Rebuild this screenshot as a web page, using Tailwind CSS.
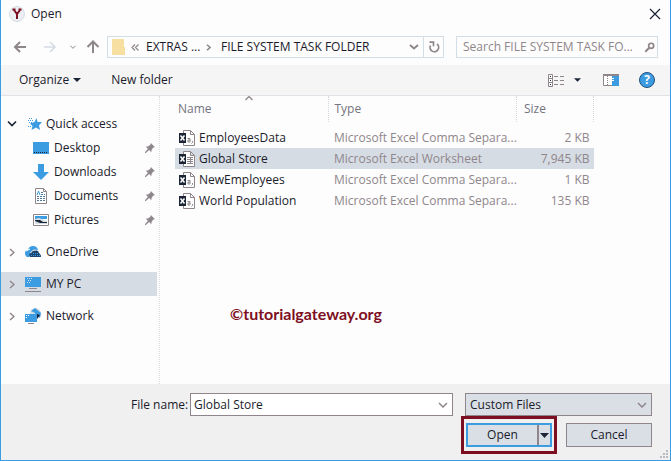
<!DOCTYPE html>
<html lang="en">
<head>
<meta charset="utf-8">
<title>Open</title>
<script src="https://cdn.jsdelivr.net/npm/@tailwindcss/browser@4"></script>
</head>
<body class="font-['Open_Sans','Noto_Sans',sans-serif] text-xs text-[#1b1b2b]">
<svg class="hidden">
  <symbol id="pin" viewBox="0 0 12 12"><path d="M7 0l5 5-2 .5L8 8l-.5 3L5 8.500 1 12 0 12 0 11 3.500 7 1 4.500 4 4 6.500 2z" fill="#8f868b"/></symbol>
  <symbol id="chev" viewBox="0 0 6 9"><path d="M1 1l4 3.500-4 3.500" fill="none" stroke="#8f868b" stroke-width="1.500"/></symbol>
  <symbol id="down" viewBox="0 0 10 6"><path d="M1 1l4 4 4-4" fill="none" stroke="currentColor" stroke-width="1.500"/></symbol>
  <symbol id="csv" viewBox="0 0 16 16"><path d="M4.500 3V.5h7l4 4v11h-11V13M11.500.5v4h4" fill="#fff" stroke="#8f868b"/><path d="M0 3h7v10H0z" fill="#1c2536"/><path d="M1.500 5.500l4 5M5.500 5.500l-4 5" stroke="#fff" stroke-width="1.500"/><path d="M8.500 8.500h2.500V12H9v-2h2M13.500 11v1.500l-1 1" fill="none" stroke="#8f868b"/></symbol>
  <symbol id="xls" viewBox="0 0 16 16"><path d="M4.500 3V.5h7l4 4v11h-11V13M11.500.5v4h4" fill="#fff" stroke="#8f868b"/><path d="M8 6.500h6M8 8.500h6M8 10.500h6M8 12.500h6M11.500 6v7" stroke="#8f868b"/><path d="M0 3h7v10H0z" fill="#1c2536"/><path d="M1.500 5.500l4 5M5.500 5.500l-4 5" stroke="#fff" stroke-width="1.500"/></symbol>
</svg>
<div class="relative flex min-h-screen flex-col border-x border-b border-[#3b9ce2] bg-[#fdfdfd]">
  <header class="flex h-9 items-center pr-2 pl-2 pb-2">
    <svg class="mr-1.5 size-4" viewBox="0 0 16 16"><circle cx="8" cy="8" r="7.500" fill="#eceef1" stroke="#d5dde5"/><path d="M3.500 3.500h3M9.500 3.500h3M5 4l3 4 3-4M8 8v5" fill="none" stroke="#7d0f23" stroke-width="2"/></svg>
    <h1 class="grow">Open</h1>
    <button aria-label="Close" class="p-px"><svg class="size-3" viewBox="0 0 12 12"><path d="M1 1l10 10M11 1L1 11" stroke="#1b2133" stroke-width="1.200"/></svg></button>
  </header>
  <nav class="flex h-[29px] items-start pr-3 pl-3" aria-label="Location">
    <div class="flex h-[22px] w-[94px] items-center text-[#8f868b]">
      <button aria-label="Back"><svg class="h-3 w-[14px]" viewBox="0 0 14 12"><path d="M13 6H2M7 1L2 6l5 5" fill="none" stroke="currentColor" stroke-width="2"/></svg></button>
      <button aria-label="Forward" class="ml-4 text-[#d3dbe3]"><svg class="h-3 w-[14px]" viewBox="0 0 14 12"><path d="M1 6h11M7 1l5 5-5 5" fill="none" stroke="currentColor" stroke-width="1.500"/></svg></button>
      <button aria-label="Recent locations" class="ml-3"><svg class="h-1 w-2" viewBox="0 0 10 6"><use href="#down"/></svg></button>
      <button aria-label="Up" class="ml-2"><svg class="h-[14px] w-4" viewBox="0 0 16 14"><path d="M8 13V2M2.500 7L8 1.500 13.500 7" fill="none" stroke="currentColor" stroke-width="2"/></svg></button>
    </div>
    <div class="flex h-[22px] grow items-center border border-[#d3dde6] text-[#1b1b2b]">
      <svg class="ml-1 h-4 w-[13px]" viewBox="0 0 13 16"><path d="M0 0h12v8h1v8H0z" fill="#f6dfa0"/></svg>
      <span class="ml-1.5 flex w-[15px] items-center"><svg class="h-[7px] w-2" viewBox="0 0 8 7"><path d="M4 .5l-3 3 3 3M7.500.5l-3 3 3 3" fill="none" stroke="#8f868b" stroke-width="1.200"/></svg></span>
      <button class="w-[60px] text-left whitespace-nowrap">EXTRAS ...</button>
      <svg class="h-[7px] w-[5px]" viewBox="0 0 6 9"><path d="M1 1l4 3.500-4 3.500" fill="none" stroke="#8f868b" stroke-width="2"/></svg>
      <button class="ml-2.5 grow text-left whitespace-nowrap">FILE SYSTEM TASK FOLDER</button>
      <button aria-label="Previous locations" class="mr-1 text-[#8f868b]"><svg class="h-[6px] w-[10px]" viewBox="0 0 10 6"><path d="M1 1l4 3.500L9 1" fill="none" stroke="currentColor" stroke-width="2"/></svg></button>
      <button aria-label="Refresh" class="flex h-full w-5 items-center justify-center border-l border-[#d3dde6]"><svg class="size-3" viewBox="0 0 12 12"><path d="M9 3A4.300 4.300 0 1 1 2.500 4.500M1.500 1.200h4v4" fill="none" stroke="#8f868b" stroke-width="1.700"/></svg></button>
    </div>
    <label class="ml-3 flex h-[22px] w-[202px] items-center border border-[#d3dde6] pr-0.5 pl-1.5">
      <input aria-label="Search" type="search" placeholder="Search FILE SYSTEM TASK FO..." class="min-w-0 grow outline-none placeholder:text-[#8f868b]">
      <svg class="size-[11px]" viewBox="0 0 13 12"><circle cx="8.500" cy="4" r="3" fill="none" stroke="#8f868b" stroke-width="2"/><path d="M6 6.500L1.500 11" stroke="#8f868b" stroke-width="2.400"/></svg>
    </label>
  </nav>
  <div class="flex h-[31px] items-center border-b border-[#dfe3e8] bg-[#f5f5f6] pr-[15px] pl-[18px]">
    <button class="flex items-center gap-1">Organize <svg class="h-1 w-2" viewBox="0 0 8 4"><path d="M0 0h8L4 4z" fill="#1c2536"/></svg></button>
    <button class="ml-[30px]">New folder</button>
    <div class="ml-auto flex items-center">
      <button aria-label="Change your view" class="flex items-center"><svg class="h-[13px] w-4" viewBox="0 0 16 13"><path d="M.5.5h4v12h-4zM.5 4.500h4M.5 8.500h4" fill="#fff" stroke="#8f868b"/><path d="M2 2.500h1M2 6.500h1M2 10.500h1" stroke="#1c2536"/><path d="M6 2.500h4M12 2.500h4M6 6.500h4M12 6.500h4M6 10.500h4M12 10.500h4" stroke="#8f868b"/></svg><svg class="ml-2.5 h-1 w-[7px]" viewBox="0 0 8 4"><path d="M0 0h8L4 4z" fill="#1c2536"/></svg></button>
      <button aria-label="Preview pane" class="ml-[22px]"><svg class="h-3 w-4" viewBox="0 0 16 12"><path d="M.5.5h15v11H.5z" fill="#fff" stroke="#8f868b"/><path d="M0 0h16v2H0z" fill="#8f868b"/><path d="M9 2h7v10H9z" fill="#3b9ce2"/><path d="M4.500 2v9" stroke="#8f868b" stroke-dasharray="1 1"/><path d="M9 4.500h2M9 6.500h2" stroke="#fff"/></svg></button>
      <button aria-label="Help" class="ml-5 size-4 rounded-full border border-[#24507a] bg-[#3b9ce2] text-xs leading-[14px] font-bold text-white">?</button>
    </div>
  </div>
  <main class="flex grow">
    <aside class="w-[159px] shrink-0 border-r border-dotted border-[#d9dde3] pt-4">
      <ul>
        <li class="flex h-6 items-center pl-1.5"><svg class="mr-[11px] h-2 w-[10px]" viewBox="0 0 10 6"><path d="M1 .5l4 4 4-4" fill="none" stroke="#1c2536" stroke-width="1.600"/></svg><svg class="mr-1 size-[14px]" viewBox="0 0 14 14"><path d="M8.500 1l1 4H14l-3 3.500 1 4.500-4-2.500L3.500 13l1-4L2 6.500 6.500 5z" fill="#3b9ce2"/><path d="M1 1.500h4M0 3.500h6M1 5.500h4M0 9.500h4" stroke="#3b9ce2" stroke-dasharray="1 1"/></svg><a href="#">Quick access</a></li>
        <li class="flex h-6 items-center pr-1 pl-8"><svg class="mr-[5px] h-3 w-4" viewBox="0 0 16 12"><path d="M0 0h16v12H0z" fill="#3b9ce2"/><path d="M1 10.500h14" stroke="#1c2536" stroke-dasharray="1 1"/></svg><a href="#" class="grow">Desktop</a><svg class="size-[10px]"><use href="#pin"/></svg></li>
        <li class="flex h-6 items-center pr-1 pl-8"><svg class="mr-[5px] size-4" viewBox="0 0 16 16"><path d="M5 0h6v8h5l-8 8-8-8h5z" fill="#3b9ce2"/></svg><a href="#" class="grow">Downloads</a><svg class="size-[10px]"><use href="#pin"/></svg></li>
        <li class="flex h-6 items-center pr-1 pl-8"><svg class="mr-[5px] size-4" viewBox="0 0 16 16"><path d="M2.500.5h8l3 3v12h-11zM10.500.5v3h3" fill="#fff" stroke="#8f868b"/><path d="M8 4.500h3M8 6.500h4M4 8.500h8M4 10.500h8M4 12.500h8" stroke="#52789c" stroke-dasharray="2 1"/><path d="M4 7l1.500-4L7 7" fill="none" stroke="#3b9ce2"/></svg><a href="#" class="grow">Documents</a><svg class="size-[10px]"><use href="#pin"/></svg></li>
        <li class="flex h-6 items-center pr-1 pl-8"><svg class="mr-[5px] h-3 w-4" viewBox="0 0 16 12"><path d="M.5.5h15v11H.5z" fill="#fff" stroke="#8f868b"/><path d="M2 2h12v3H2z" fill="#3b9ce2"/><path d="M2 5l4-1 8 3v3H2z" fill="#d5dde5"/><path d="M2 6l5 0 3 2 4 0v1H7L2 7z" fill="#1c2536"/></svg><a href="#" class="grow">Pictures</a><svg class="size-[10px]"><use href="#pin"/></svg></li>
      </ul>
      <ul class="mt-2 flex flex-col gap-2">
        <li class="flex h-6 items-center pl-2"><svg class="mr-[10px] h-[9px] w-[6px]"><use href="#chev"/></svg><svg class="mr-[5px] h-3 w-4" viewBox="0 0 16 12"><path d="M0 7q0-3 3-3 1-4 5-4 4 0 5 4l-3 0-4 3-2 4H2Q0 10 0 7z" fill="#3b9ce2"/><path d="M5 11q-2-3 1-4 1-4 5-3 3 1 3 3 2 1 2 4z" fill="#1c456e"/><path d="M5.500 7q2-4 6-3M1 5l4-2" fill="none" stroke="#fff"/><path d="M6 9.500h9M8 7.500h6" stroke="#3b9ce2" stroke-dasharray="1 1"/></svg><a href="#">OneDrive</a></li>
        <li class="mr-0.5 flex h-6 items-center bg-[#d6dce4] pl-2"><svg class="mr-[10px] h-[9px] w-[6px]"><use href="#chev"/></svg><svg class="mr-[5px] size-4" viewBox="0 0 16 16"><path d="M0 1h16v10H0z" fill="#3b9ce2"/><path d="M2 2.500h6M3 4.500h4M2 6.500h3" stroke="#d6dce4" stroke-dasharray="1 1"/><path d="M4 12.500h8M0 15.500h16" stroke="#8f868b"/></svg><a href="#">MY PC</a></li>
        <li class="flex h-6 items-center pl-2"><svg class="mr-[10px] h-[9px] w-[6px]"><use href="#chev"/></svg><svg class="mr-[5px] size-4" viewBox="0 0 16 16"><circle cx="10.500" cy="5.500" r="5.500" fill="#d5dde5"/><path d="M10 0v6l5 4 1-5zM6 3l4-3v5z" fill="#3b9ce2"/><path d="M12 6l3 1-3 4z" fill="#1c2536"/><path d="M0 6h12v8H0z" fill="#3b9ce2"/><path d="M1 7.500h3M1 9.500h2" stroke="#fff" stroke-dasharray="1 1"/><path d="M3 15.500h6" stroke="#8f868b"/></svg><a href="#">Network</a></li>
      </ul>
    </aside>
    <section class="grow pl-[15px]">
      <div class="relative mr-[76px]">
        <svg class="absolute top-0 left-[70px] h-[5px] w-2" viewBox="0 0 8 5"><path d="M.5 4L4 .5 7.500 4" fill="none" stroke="#8f868b" stroke-width="1.300"/></svg>
        <table class="w-full table-fixed border-collapse text-[#8f868b]">
          <colgroup><col class="w-[153px]"><col><col class="w-[77px]"></colgroup>
          <thead class="text-[#74747f]">
            <tr class="h-[26px] text-left">
              <th class="border-r border-dotted border-[#d3d8df] p-0 pl-[3px] font-normal">Name</th>
              <th class="border-r border-dotted border-[#d3d8df] p-0 pl-1.5 font-normal">Type</th>
              <th class="border-r border-dotted border-[#d3d8df] p-0 pl-[7px] font-normal">Size</th>
            </tr>
          </thead>
          <tbody class="before:block before:h-[5px] before:content-['']">
            <tr class="h-[21px]"><td class="p-0 pl-1"><a href="#" class="flex items-center gap-1 text-[#1b1b2b]"><svg class="size-4"><use href="#csv"/></svg>EmployeesData</a></td><td class="p-0 pl-1.5 whitespace-nowrap">Microsoft Excel Comma Separa...</td><td class="p-0 pr-1 text-right">2 KB</td></tr>
            <tr class="h-[21px] bg-[#d6dce4]"><td class="p-0 pl-1"><a href="#" class="flex items-center gap-1 text-[#1b1b2b]"><svg class="size-4"><use href="#xls"/></svg>Global Store</a></td><td class="p-0 pl-1.5 whitespace-nowrap">Microsoft Excel Worksheet</td><td class="p-0 pr-1 text-right">7,945 KB</td></tr>
            <tr class="h-[21px]"><td class="p-0 pl-1"><a href="#" class="flex items-center gap-1 text-[#1b1b2b]"><svg class="size-4"><use href="#csv"/></svg>NewEmployees</a></td><td class="p-0 pl-1.5 whitespace-nowrap">Microsoft Excel Comma Separa...</td><td class="p-0 pr-1 text-right">1 KB</td></tr>
            <tr class="h-[21px]"><td class="p-0 pl-1"><a href="#" class="flex items-center gap-1 text-[#1b1b2b]"><svg class="size-4"><use href="#csv"/></svg>World Population</a></td><td class="p-0 pl-1.5 whitespace-nowrap">Microsoft Excel Comma Separa...</td><td class="p-0 pr-1 text-right">135 KB</td></tr>
          </tbody>
        </table>
      </div>
      <p class="mt-[91px] ml-[55px] font-[Lato,sans-serif] text-base font-bold text-[#7d0f23]">©tutorialgateway.org</p>
    </section>
  </main>
  <footer class="flex h-[76px] flex-col bg-[#f0f0f0] pt-[9px] pr-[18px]">
    <div class="flex h-[23px] pl-[130px]">
      <label for="fname" class="w-[59px] leading-6 whitespace-nowrap">File name:</label>
      <div class="relative mr-3 grow border border-[#8f868b] bg-white">
        <input id="fname" value="Global Store" class="h-full w-full px-[3px] outline-none">
        <svg class="pointer-events-none absolute top-2 right-1 h-[6px] w-[10px] text-[#8f868b]"><use href="#down"/></svg>
      </div>
      <div class="relative w-[187px] border border-[#8f868b] bg-[#d9dfe5]">
        <select aria-label="File type" class="h-full w-full appearance-none px-1 outline-none"><option>Custom Files</option></select>
        <svg class="pointer-events-none absolute top-2 right-1 h-[6px] w-[10px] text-[#8f868b]"><use href="#down"/></svg>
      </div>
    </div>
    <div class="flex items-center justify-end gap-[9px]">
      <div class="border-3 border-[#7d0f23] px-0.5 py-1">
        <div class="flex h-6 w-[86px] border-2 border-[#3b9ce2] bg-[#d9dfe5]">
          <button class="grow">Open</button>
          <button aria-label="More open options" class="flex w-[13px] items-center justify-center border-l-2 border-[#8f868b]"><svg class="h-[5px] w-[9px]" viewBox="0 0 9 5"><path d="M0 0h9L4.500 5z" fill="#1c2536"/></svg></button>
        </div>
      </div>
      <button class="h-6 w-[86px] border border-[#8f868b] bg-[#d9dfe5]">Cancel</button>
    </div>
  </footer>
  <svg class="absolute right-0.5 bottom-0.5 size-2" viewBox="0 0 8 8"><path d="M6 0h2v2H6zM3 3h2v2H3zM6 3h2v2H6zM0 6h2v2H0zM3 6h2v2H3zM6 6h2v2H6z" fill="#b9bcc2"/></svg>
</div>
</body>
</html>
